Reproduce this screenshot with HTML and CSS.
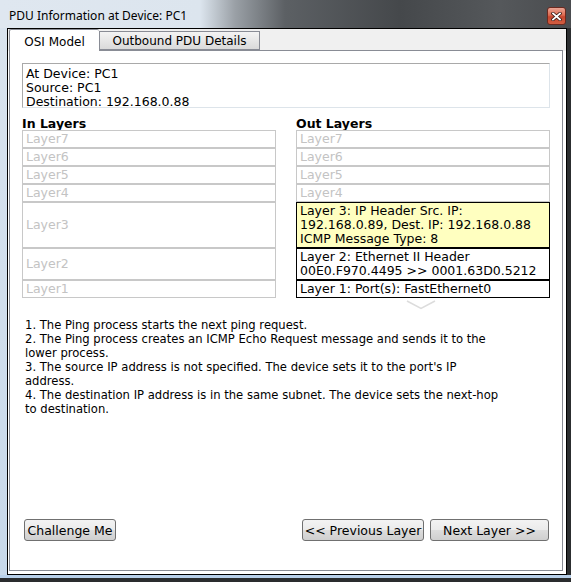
FILE: index.html
```html
<!DOCTYPE html>
<html>
<head>
<meta charset="utf-8">
<link rel="stylesheet" href="styles.css">
</head>
<body>
<div class="window">
  <div class="titlebar">
    <span class="title">PDU Information at Device: PC1</span>
    <span class="close" aria-label="Close">
      <svg width="11" height="9" viewBox="0 0 11 9"><path d="M2 1.5 L9 7.5 M9 1.5 L2 7.5" stroke="#3b1a14" stroke-width="3.4" stroke-linecap="square"/><path d="M2 1.5 L9 7.5 M9 1.5 L2 7.5" stroke="#ffffff" stroke-width="1.8" stroke-linecap="square"/></svg>
    </span>
  </div>
  <div class="middle">
    <div class="frame-left"></div>
    <div class="client">
      <div class="tabs">
        <div class="tab active">OSI Model</div>
        <div class="tab">Outbound PDU Details</div>
      </div>
      <div class="pane">
        <div class="info">
          <div>At Device: PC1</div>
          <div>Source: PC1</div>
          <div>Destination: 192.168.0.88</div>
        </div>
        <div class="columns">
          <div class="col">
            <div class="col-head">In Layers</div>
            <div class="layer dim">Layer7</div>
            <div class="layer dim">Layer6</div>
            <div class="layer dim">Layer5</div>
            <div class="layer dim">Layer4</div>
            <div class="layer dim tall3">Layer3</div>
            <div class="layer dim tall2">Layer2</div>
            <div class="layer dim">Layer1</div>
          </div>
          <div class="col out">
            <div class="col-head">Out Layers</div>
            <div class="layer dim">Layer7</div>
            <div class="layer dim">Layer6</div>
            <div class="layer dim">Layer5</div>
            <div class="layer dim">Layer4</div>
            <div class="layer active hl tall3">Layer 3: IP Header Src. IP: 192.168.0.89, Dest. IP: 192.168.0.88<br>ICMP Message Type: 8</div>
            <div class="layer active tall2">Layer 2: Ethernet II Header<br>00E0.F970.4495 &gt;&gt; 0001.63D0.5212</div>
            <div class="layer active">Layer 1: Port(s): FastEthernet0</div>
            <svg class="chevron" width="30" height="10" viewBox="0 0 30 10"><path d="M1 1 L15 8.5 L29 1" fill="none" stroke="#dcdcdc" stroke-width="1.5"/></svg>
          </div>
        </div>
        <div class="desc">
          <div>1. The Ping process starts the next ping request.</div>
          <div>2. The Ping process creates an ICMP Echo Request message and sends it to the lower process.</div>
          <div>3. The source IP address is not specified. The device sets it to the port's IP address.</div>
          <div>4. The destination IP address is in the same subnet. The device sets the next-hop to destination.</div>
        </div>
        <div class="buttons">
          <button class="btn btn-challenge">Challenge Me</button>
          <div class="nav">
            <button class="btn btn-prev">&lt;&lt; Previous Layer</button>
            <button class="btn btn-next">Next Layer &gt;&gt;</button>
          </div>
        </div>
      </div>
    </div>
    <div class="frame-right"></div>
  </div>
  <div class="frame-bottom"></div>
</div>
</body>
</html>
```
FILE: styles.css
```css
* { box-sizing: border-box; }
html, body { margin: 0; padding: 0; }
body {
  background: #2a2c2e;
  width: 571px;
  height: 582px;
  overflow: hidden;
  font-family: "DejaVu Sans", Verdana, sans-serif;
  font-size: 12.5px;
  color: #000;
}
.window {
  width: 571px;
  height: 582px;
  display: flex;
  flex-direction: column;
}
.titlebar {
  height: 28px;
  flex: none;
  display: flex;
  align-items: center;
  justify-content: space-between;
  padding: 0 5px 0 9px;
  background: linear-gradient(to right, #dfe7f0 0, #dce5ee 200px, #9aa0a6 235px, #5c6064 285px, #45484b 400px, #55585b 500px, #4a4c4f 571px);
}
.title {
  font-family: "Noto Sans", "Open Sans", sans-serif;
  font-size: 12px;
  color: #000;
  padding-top: 2px;
}
.close {
  width: 19px;
  height: 18px;
  margin-top: 4px;
  border: 1px solid #6b2a20;
  border-radius: 3px;
  background: linear-gradient(to bottom, #eaa595 0, #dd6a50 45%, #c6462e 55%, #d25e42 100%);
  display: flex;
  align-items: center;
  justify-content: center;
}
.middle {
  flex: 1;
  display: flex;
}
.frame-left {
  width: 7px;
  flex: none;
  background: linear-gradient(to bottom, #d9e3ee, #c7d8ea);
}
.frame-right {
  width: 4px;
  flex: none;
  background: #2c2e30;
}
.frame-bottom {
  height: 7px;
  flex: none;
  background: linear-gradient(to bottom, #b8d0ea 0, #b8d0ea 3px, #2a2c2e 3px);
}
.client {
  flex: 1;
  border: 1px solid #000;
  display: flex;
  flex-direction: column;
  padding: 0 3px 3px 1px;
  background: linear-gradient(to bottom, #f0f0f0 0, #f0f0f0 22px, #fff 22px);
}
.tabs {
  height: 22px;
  flex: none;
  display: flex;
  align-items: flex-end;
  position: relative;
  z-index: 1;
  margin-bottom: -1px;
}
.tab {
  font-size: 12px;
  border: 1px solid #898c95;
  display: flex;
  align-items: center;
  justify-content: center;
  color: #000;
}
.tab.active {
  height: 22px;
  width: 90px;
  padding-top: 2px;
  background: #fff;
  border-right: none;
  border-bottom: none;
  border-radius: 2px 2px 0 0;
}
.tab:not(.active) {
  margin-bottom: 1px;
  width: 161px;
  height: 19px;
  padding-top: 1px;
  background: linear-gradient(to bottom, #f3f3f3, #dadada);
}
.pane {
  flex: 1;
  border: 1px solid #898c95;
  background: #fff;
  padding: 12px 12px 29px 12px;
  display: flex;
  flex-direction: column;
}
.info {
  height: 45px;
  border: 1px solid;
  border-color: #a9a9a9 #dde4ea #dde4ea #a9a9a9;
  padding: 3px 3px 0;
  line-height: 14px;
}
.columns {
  display: flex;
  gap: 20px;
  margin-top: 7px;
}
.col {
  width: 254px;
  display: flex;
  flex-direction: column;
  position: relative;
}
.col-head {
  font-weight: bold;
  height: 15px;
  padding-top: 2px;
  line-height: 13px;
}
.layer {
  border: 1px solid #c8c8c8;
  height: 18px;
  line-height: 14px;
  padding: 1px 3px;
  background: #fff;
}
.layer.dim { color: #c3c3c3; }
.layer.tall3 { height: 46px; }
.layer.tall2 { height: 32px; }
.layer.dim.tall3, .layer.dim.tall2 { display: flex; align-items: center; }
.layer.active { border-color: #000; color: #000; padding: 1px 3px 0; }
.layer.hl { background: #ffffc0; }
.chevron {
  position: absolute;
  left: 110px;
  top: 185px;
}
.desc {
  flex: 1;
  font-size: 11.6px;
  margin-top: 20px;
  margin-left: 3px;
  width: 482px;
  line-height: 14px;
}
.buttons {
  display: flex;
  justify-content: space-between;
  align-items: center;
  padding: 0 1px 0 2px;
}
.nav { display: flex; gap: 6px; }
.btn {
  font-family: "DejaVu Sans", Verdana, sans-serif;
  font-size: 12.5px;
  height: 22px;
  border: 1px solid #707070;
  border-radius: 3px;
  background: linear-gradient(to bottom, #f3f3f3 0, #ebebeb 50%, #dddddd 51%, #cfcfcf 100%);
  color: #000;
  padding: 0;
  margin: 0;
}
.btn-challenge { width: 92px; }
.btn-prev { width: 122px; }
.btn-next { width: 119px; }
```
